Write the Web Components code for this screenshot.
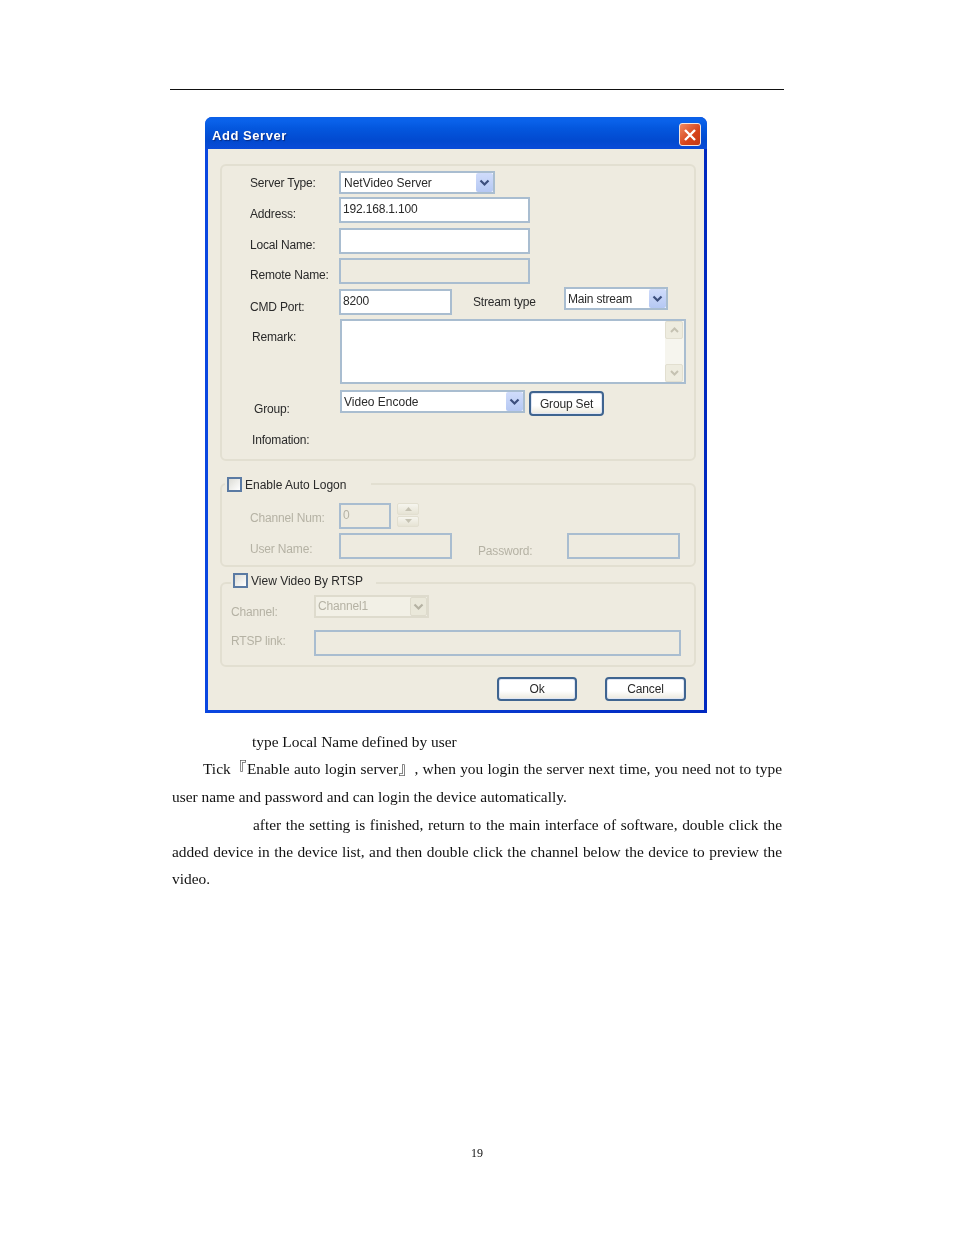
<!DOCTYPE html>
<html>
<head>
<meta charset="utf-8">
<title>Add Server</title>
<style>
  html, body { margin: 0; padding: 0; background: #fff; }
</style>
</head>
<body>

<!-- doc page: rule, picture, paragraphs, page number -->
<doc-page>
  <add-server slot="figure"></add-server>
  <doc-para top="15" indent="80">type Local Name defined by user</doc-para>
  <doc-para top="0" indent="31" lh="27.5">Tick『Enable auto login server』, when you login the server next time, you need not to type user name and password and can login the device automatically.</doc-para>
  <doc-para top="1" indent="81" lh="27.2">after the setting is finished, return to the main interface of software, double click the added device in the device list, and then double click the channel below the device to preview the video.</doc-para>
  <span slot="num">19</span>
</doc-page>

<script>
class DocPage extends HTMLElement {
  constructor() {
    super();
    this.attachShadow({ mode: "open" }).innerHTML = `
      <style>
        :host { display: block; width: 954px; height: 1235px; overflow: hidden; position: relative; }
        .rule { margin: 89px 0 0 170px; width: 614px; height: 1px; background: #111; }
        .fig { margin: 27px 0 0 205px; width: 502px; }
        .text { margin-left: 172px; width: 610px; filter: blur(.3px); }
        .num { position: absolute; left: 0; right: 0; top: 1146px; text-align: center; font: 12px "Liberation Serif", serif; color: #111; filter: blur(.3px); }
      </style>
      <div class="rule"></div>
      <div class="fig"><slot name="figure"></slot></div>
      <div class="text"><slot></slot></div>
      <div class="num"><slot name="num"></slot></div>`;
  }
}
customElements.define("doc-page", DocPage);

class DocPara extends HTMLElement {
  constructor() {
    super();
    const lh = this.getAttribute("lh") || "27";
    this.attachShadow({ mode: "open" }).innerHTML = `
      <style>
        :host {
          display: block;
          font: 15.4px/${lh}px "Liberation Serif", "Noto Sans CJK SC", serif;
          color: #111;
          text-align: justify;
          text-indent: ${this.getAttribute("indent") || 0}px;
          margin-top: ${this.getAttribute("top") || 0}px;
        }
      </style><slot></slot>`;
  }
}
customElements.define("doc-para", DocPara);

// text box, disabled ones just go grey through the attribute
class XpInput extends HTMLElement {
  constructor() {
    super();
    this.attachShadow({ mode: "open" }).innerHTML = `
      <style>
        :host {
          display: block; box-sizing: border-box; height: 26px;
          border: 2px solid #a9bdd0; background: #fff;
          padding-left: 2px; font-size: 12px; line-height: 20px; color: #2a2a2a;
        }
        :host([disabled]) { background: #eeebe0; color: #b5b2a4; }
      </style><slot></slot>`;
  }
}
customElements.define("xp-input", XpInput);

const chevron = c => `<svg width="11" height="8" viewBox="0 0 11 8"><path d="M1.5 1.5 5.5 5.5 9.5 1.5" fill="none" stroke="${c}" stroke-width="2.2"/></svg>`;

class XpCombo extends HTMLElement {
  constructor() {
    super();
    const off = this.hasAttribute("disabled");
    this.attachShadow({ mode: "open" }).innerHTML = `
      <style>
        :host {
          display: flex; box-sizing: border-box; height: 23px;
          border: 2px solid #a9bdd0; background: #fff;
          font-size: 12px; line-height: 20px; color: #2a2a2a; padding-left: 2px;
        }
        :host([disabled]) { background: #f2f0e6; color: #b5b2a4; border-color: #dedbcd; line-height: 18px; }
        .t { flex: 1; white-space: nowrap; }
        .b {
          width: 17px; height: 19px; display: flex; align-items: center; justify-content: center;
          background: linear-gradient(#d0dcfb, #b5c8f3); border-radius: 2px;
        }
        :host([disabled]) .b { background: #eae8da; border: 1px solid #dedbcc; box-sizing: border-box; }
      </style>
      <div class="t"><slot></slot></div>
      <div class="b">${chevron(off ? "#b5b2a3" : "#3c4f7d")}</div>`;
  }
}
customElements.define("xp-combo", XpCombo);

class XpButton extends HTMLElement {
  constructor() {
    super();
    this.attachShadow({ mode: "open" }).innerHTML = `
      <style>
        :host {
          display: flex; box-sizing: border-box; height: 24px;
          align-items: center; justify-content: center;
          border: 2px solid #3f6490; border-radius: 4px;
          background: linear-gradient(#ffffff 60%, #ebe8dc);
          box-shadow: inset 0 0 0 1px #dfe6f5;
          font-size: 12px; color: #2a2a2a;
        }
      </style><slot></slot>`;
  }
}
customElements.define("xp-button", XpButton);

class XpCheck extends HTMLElement {
  constructor() {
    super();
    this.attachShadow({ mode: "open" }).innerHTML = `
      <style>
        :host { display: flex; align-items: center; gap: 3px; font-size: 12px; color: #2a2a2a; white-space: nowrap; letter-spacing: 0; }
        i { display: block; box-sizing: border-box; width: 15px; height: 15px; border: 2px solid #5a7aa3; background: linear-gradient(135deg, #dcdcd6, #fff); }
      </style><i></i><slot></slot>`;
  }
}
customElements.define("xp-check", XpCheck);

class XpGroup extends HTMLElement {
  constructor() {
    super();
    this.attachShadow({ mode: "open" }).innerHTML = `
      <style>
        :host {
          display: block; box-sizing: border-box; position: relative;
          width: 476px; margin-left: 12px;
          border: 2px solid #e2dfd1; border-radius: 6px;
        }
        .legend { position: absolute; background: #eeebe0; padding-left: 2px; box-sizing: border-box; }
      </style>
      <div class="legend" part="legend"><slot name="legend"></slot></div>
      <slot></slot>`;
    const lg = this.shadowRoot.querySelector(".legend");
    if (this.hasAttribute("lx")) {
      lg.style.left = this.getAttribute("lx") + "px";
      lg.style.top = this.getAttribute("ly") + "px";
      lg.style.width = this.getAttribute("lw") + "px";
    }
  }
}
customElements.define("xp-group", XpGroup);

class AddServer extends HTMLElement {
  constructor() {
    super();
    this.attachShadow({ mode: "open" }).innerHTML = `
      <style>
        :host {
          display: block; box-sizing: border-box; width: 502px; height: 596px;
          font: 12px "Liberation Sans", Arial, sans-serif; color: #2a2a2a; letter-spacing: -.17px;
          background: linear-gradient(90deg, #0a46e0, #0a3cd0 50%, #0028c0);
          border-radius: 7px 7px 0 0; overflow: hidden;
          filter: blur(.4px);
        }
        .title {
          height: 32px; display: flex; align-items: center; justify-content: space-between;
          padding: 0 6px 0 7px; box-sizing: border-box;
          background: linear-gradient(#0a5fe8 0, #0a62ea 12%, #0457de 35%, #0249cf 75%, #0a4bd8 100%);
          color: #fff; font: bold 13px "Liberation Sans", sans-serif; letter-spacing: .55px;
          text-shadow: 1px 1px 1px #0a2a80;
        }
        .title span { padding-top: 4px; }
        .close {
          width: 22px; height: 23px; box-sizing: border-box; border: 1px solid #f4e6df; border-radius: 3px;
          margin-top: 3px;
          background: linear-gradient(135deg, #f08a62, #d6431a 60%, #c23a18);
          display: flex; align-items: center; justify-content: center;
        }
        .body {
          margin: 0 3px 3px; height: 561px; background: #eeebe0; box-sizing: border-box;
          padding-top: 15px;
        }
        .row { display: flex; align-items: flex-start; margin-left: 28px; }
        .row > span { white-space: nowrap; display: block; }
        .off > span { color: #b5b2a4; }
        .btns { display: flex; margin: 10px 0 0 289px; }
      </style>
      <div class="title">
        <span>Add Server</span>
        <div class="close"><svg width="14" height="14" viewBox="0 0 14 14"><path d="M2 2 12 12M12 2 2 12" stroke="#fff" stroke-width="2.4" fill="none"/></svg></div>
      </div>
      <div class="body">
        <xp-group style="height:297px">
          <div class="row" style="margin-top:5px;height:23px">
            <span style="width:89px;line-height:24px">Server Type:</span>
            <xp-combo style="width:156px;letter-spacing:0;padding-left:3px">NetVideo Server</xp-combo>
          </div>
          <div class="row" style="margin-top:3px;height:26px">
            <span style="width:89px;line-height:34px">Address:</span>
            <xp-input style="width:191px">192.168.1.100</xp-input>
          </div>
          <div class="row" style="margin-top:5px;height:26px">
            <span style="width:89px;line-height:34px">Local Name:</span>
            <xp-input style="width:191px"></xp-input>
          </div>
          <div class="row" style="margin-top:4px;height:26px">
            <span style="width:89px;line-height:34px">Remote Name:</span>
            <xp-input disabled style="width:191px"></xp-input>
          </div>
          <div class="row" style="margin-top:3px;height:28px">
            <span style="width:89px;line-height:40px">CMD Port:</span>
            <xp-input style="width:113px;margin-top:2px">8200</xp-input>
            <span style="margin-left:21px;width:91px;line-height:30px">Stream type</span>
            <xp-combo style="width:104px">Main stream</xp-combo>
          </div>
          <div class="row" style="margin-top:4px;height:65px">
            <span style="margin-left:2px;width:88px;line-height:36px">Remark:</span>
            <xp-memo style="width:346px;height:65px"></xp-memo>
          </div>
          <div class="row" style="margin-top:6px;height:26px">
            <span style="margin-left:4px;width:86px;line-height:38px">Group:</span>
            <xp-combo style="width:185px;letter-spacing:0">Video Encode</xp-combo>
            <xp-button style="width:75px;height:25px;margin:1px 0 0 4px">Group Set</xp-button>
          </div>
          <div class="row" style="margin-top:14px">
            <span style="margin-left:2px;line-height:20px">Infomation:</span>
          </div>
        </xp-group>

        <xp-group style="height:84px;margin-top:22px" lx="3" ly="-8" lw="146">
          <xp-check slot="legend">Enable Auto Logon</xp-check>
          <div class="row off" style="margin-top:18px;height:26px">
            <span style="width:89px;line-height:30px">Channel Num:</span>
            <xp-input disabled style="width:52px">0</xp-input>
            <xp-spin style="margin-left:6px"></xp-spin>
          </div>
          <div class="row off" style="margin-top:4px;height:26px">
            <span style="width:89px;line-height:32px">User Name:</span>
            <xp-input disabled style="width:113px"></xp-input>
            <span style="margin-left:26px;width:89px;line-height:36px">Password:</span>
            <xp-input disabled style="width:113px"></xp-input>
          </div>
        </xp-group>

        <xp-group style="height:85px;margin-top:15px" lx="9" ly="-11" lw="145">
          <xp-check slot="legend">View Video By RTSP</xp-check>
          <div class="row off" style="margin:11px 0 0 9px;height:23px">
            <span style="width:83px;line-height:34px">Channel:</span>
            <xp-combo disabled style="width:115px">Channel1</xp-combo>
          </div>
          <div class="row off" style="margin:12px 0 0 9px;height:26px">
            <span style="width:83px;line-height:22px">RTSP link:</span>
            <xp-input disabled style="width:367px"></xp-input>
          </div>
        </xp-group>

        <div class="btns">
          <xp-button style="width:80px">Ok</xp-button>
          <xp-button style="width:81px;margin-left:28px">Cancel</xp-button>
        </div>
      </div>`;
  }
}

class XpMemo extends HTMLElement {
  constructor() {
    super();
    const arrow = d => `<svg width="9" height="6" viewBox="0 0 9 6"><path d="${d}" fill="none" stroke="#c5c2b2" stroke-width="2"/></svg>`;
    this.attachShadow({ mode: "open" }).innerHTML = `
      <style>
        :host { display: flex; box-sizing: border-box; border: 2px solid #a9bdd0; background: #fff; justify-content: flex-end; }
        .sb { width: 18px; display: flex; flex-direction: column; justify-content: space-between; background: #f6f5ee; padding-right: 1px; }
        .sb b { display: flex; align-items: center; justify-content: center; height: 18px; background: #eeecdf; border: 1px solid #e2dfd0; border-radius: 2px; box-sizing: border-box; }
      </style>
      <div class="sb"><b>${arrow("M1 5 4.5 1.5 8 5")}</b><b>${arrow("M1 1 4.5 4.5 8 1")}</b></div>`;
  }
}
customElements.define("xp-memo", XpMemo);

class XpSpin extends HTMLElement {
  constructor() {
    super();
    this.attachShadow({ mode: "open" }).innerHTML = `
      <style>
        :host { display: flex; flex-direction: column; gap: 1px; width: 22px; height: 24px; }
        b { flex: 1; display: flex; align-items: center; justify-content: center; background: linear-gradient(#f6f5ee, #e6e3d4); border: 1px solid #e2dfd0; border-radius: 2px; box-sizing: border-box; }
      </style>
      <b><svg width="7" height="4" viewBox="0 0 7 4"><path d="M0 4 3.5 0 7 4z" fill="#c5c2b2"/></svg></b>
      <b><svg width="7" height="4" viewBox="0 0 7 4"><path d="M0 0 3.5 4 7 0z" fill="#c5c2b2"/></svg></b>`;
  }
}
customElements.define("xp-spin", XpSpin);

customElements.define("add-server", AddServer);
</script>
</body>
</html>
